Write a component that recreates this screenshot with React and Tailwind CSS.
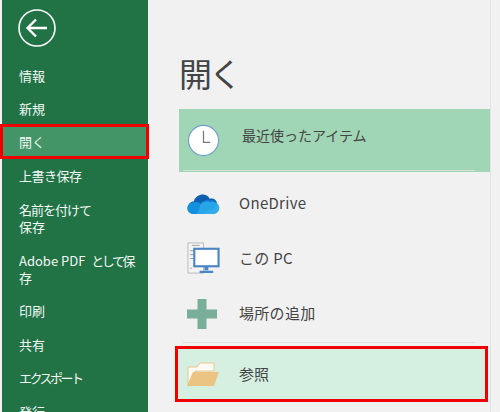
const FONT = "font-['Noto_Sans_CJK_JP','Noto_Sans',sans-serif]";

const ClockIcon = () => (
  <svg width="33" height="33" viewBox="0 0 34 34">
    <circle cx="17" cy="17" r="15.500" fill="#fff" stroke="#6f9fcf" strokeWidth="1.200" />
    <path d="M17 7v12h7" fill="none" stroke="#7a7a7a" strokeWidth="1.300" />
  </svg>
);

const CloudIcon = () => (
  <svg width="33" height="22" viewBox="0 0 34 23">
    <path d="M7 18C0 17 0 9 7 8.500 9 1 20-1 23.500 6c4-1 7 1 7.500 4.500L20 19z" fill="#0f5fb0" />
    <path d="M14 11c3-3 7-5 10-3.500 3.500-1 6.500 1 7.500 4.500L26 18 15 15z" fill="#0f78d4" />
    <path d="M6 10c3-1 6-.5 8 1.500L24 17l-8 5H6c-3 0-6-2.500-6-6s3-6 6-6z" fill="#1490df" />
    <path d="M14 11.500c3-3 7-3.500 10-2 4-1.500 9 1 9.500 5.500.3 3-2 7-5.500 7H8c4-1 4-4 6-10.500z" fill="#28a8ea" opacity="0.950" />
  </svg>
);

const PcIcon = () => (
  <svg width="33" height="33" viewBox="0 0 34 34">
    <path d="M1 1h16v31H1z" fill="#f4f4f4" stroke="#b8b8b8" />
    <path d="M5 3.500h8M3 9h6M3 13h6M3 17h6M3 27h2" stroke="#a0a0a0" fill="none" />
    <rect x="7.500" y="7" width="25" height="18" fill="#fff" stroke="#4a86c5" strokeWidth="2.200" />
    <path d="M18 25h4v4h-4zM13 29.500h14v2.500H13z" fill="#4a86c5" />
  </svg>
);

const PlusIcon = () => (
  <svg width="30" height="30" viewBox="0 0 30 30">
    <path d="M10.500 0h9v10.500H30v9H19.500V30h-9V19.500H0v-9h10.500z" fill="#79ae98" />
  </svg>
);

const FolderIcon = () => (
  <svg width="32" height="26" viewBox="0 0 32 26">
    <path d="M1 24V6h9l3-4h14v8H8z" fill="#fdfbf5" stroke="#ecc68c" />
    <path d="M0 25l6-14h26l-5 14z" fill="#ebc484" />
  </svg>
);

const navItems = [
  { label: '情報', h: 'h-[34px]' },
  { label: '新規', h: 'h-[33px]' },
  { label: '開く', h: '-mt-[1px] h-[35px]', active: true },
  { label: <span className="tracking-[-0.5px]">上書き保存</span>, h: 'h-[33px]' },
  { label: <><span className="tracking-[-1px]">名前を付けて</span><br />保存</>, h: 'h-[52px]' },
  { label: <>Adobe PDF <span className="ml-[3px] tracking-[-2.500px]">として保</span><br />存</>, h: 'h-[50px]' },
  { label: '印刷', h: 'h-[33px]' },
  { label: '共有', h: 'h-[34px]' },
  { label: <span className="tracking-[-2.500px]">エクスポート</span>, h: 'h-[33px]' },
  { label: '発行', h: 'h-[34px]' },
];

const places = [
  { label: 'OneDrive', icon: <CloudIcon /> },
  { label: 'この PC', icon: <PcIcon /> },
  { label: '場所の追加', icon: <PlusIcon /> },
];

export default function App() {
  return (
    <div className={`${FONT} flex h-[412px] w-[500px] overflow-hidden bg-[#f1f1f1] text-[#444]`}>
      <aside className="ml-[2px] flex h-[412px] w-[146px] shrink-0 flex-col bg-[#217346] text-[13px] leading-[17px] text-[#f2f7f4]">
        <div className="flex h-[58px] shrink-0 items-start pl-[15px] pt-[8px]">
          <svg width="40" height="40" viewBox="0 0 40 40">
            <circle cx="20" cy="20" r="18" fill="none" stroke="#fff" strokeWidth="1.600" />
            <path d="M30 20H11M19 11.500L10.500 20l8.500 8.500" fill="none" stroke="#fff" strokeWidth="2.400" />
          </svg>
        </div>
        {navItems.map((item, i) => (
          <div
            key={i}
            className={`${item.h} flex shrink-0 items-center ${item.active ? '-ml-[2px] -mr-[1px] border-[3px] border-[#f00000] bg-[#439467] pl-[16px]' : 'pl-[17px]'}`}
          >
            <span className="whitespace-nowrap">{item.label}</span>
          </div>
        ))}
      </aside>

      <main className="flex h-[412px] w-[343px] shrink-0 flex-col border-r border-[#e2e2e2] pl-[31px] pt-[50px]">
        <h1 className="h-[59px] shrink-0 text-[33px] leading-[46px] font-normal tracking-[-3px] text-[#444]">開く</h1>
        <div className="relative flex h-[63px] shrink-0 items-center bg-[#a0d5b5] pl-[8px]">
          <ClockIcon />
          <span className="ml-[22px] pb-[10px] text-[14px]">最近使ったアイテム</span>
          <div className="absolute bottom-[1px] left-[4px] right-[15px] h-[1px] bg-[#d5dfd9]" />
        </div>
        <div className="flex shrink-0 flex-col pt-[4px]">
          {places.map((p) => (
            <div key={p.label} className="flex h-[55px] items-center">
              <div className="flex w-[60px] shrink-0 justify-start pl-[8px]">{p.icon}</div>
              <span className="text-[15px] tracking-[0.3px]">{p.label}</span>
            </div>
          ))}
        </div>
        <div className="ml-[4px] mr-[15px] mt-[1px] h-[1px] shrink-0 bg-[#dedede]" />
        <div className="ml-[-4px] mr-[2px] mt-[3px] flex h-[56px] shrink-0 items-center border-[3px] border-[#f00000] bg-[#d5f0e1] pl-[9px]">
          <FolderIcon />
          <span className="ml-[20px] text-[15px]">参照</span>
        </div>
      </main>
    </div>
  );
}
